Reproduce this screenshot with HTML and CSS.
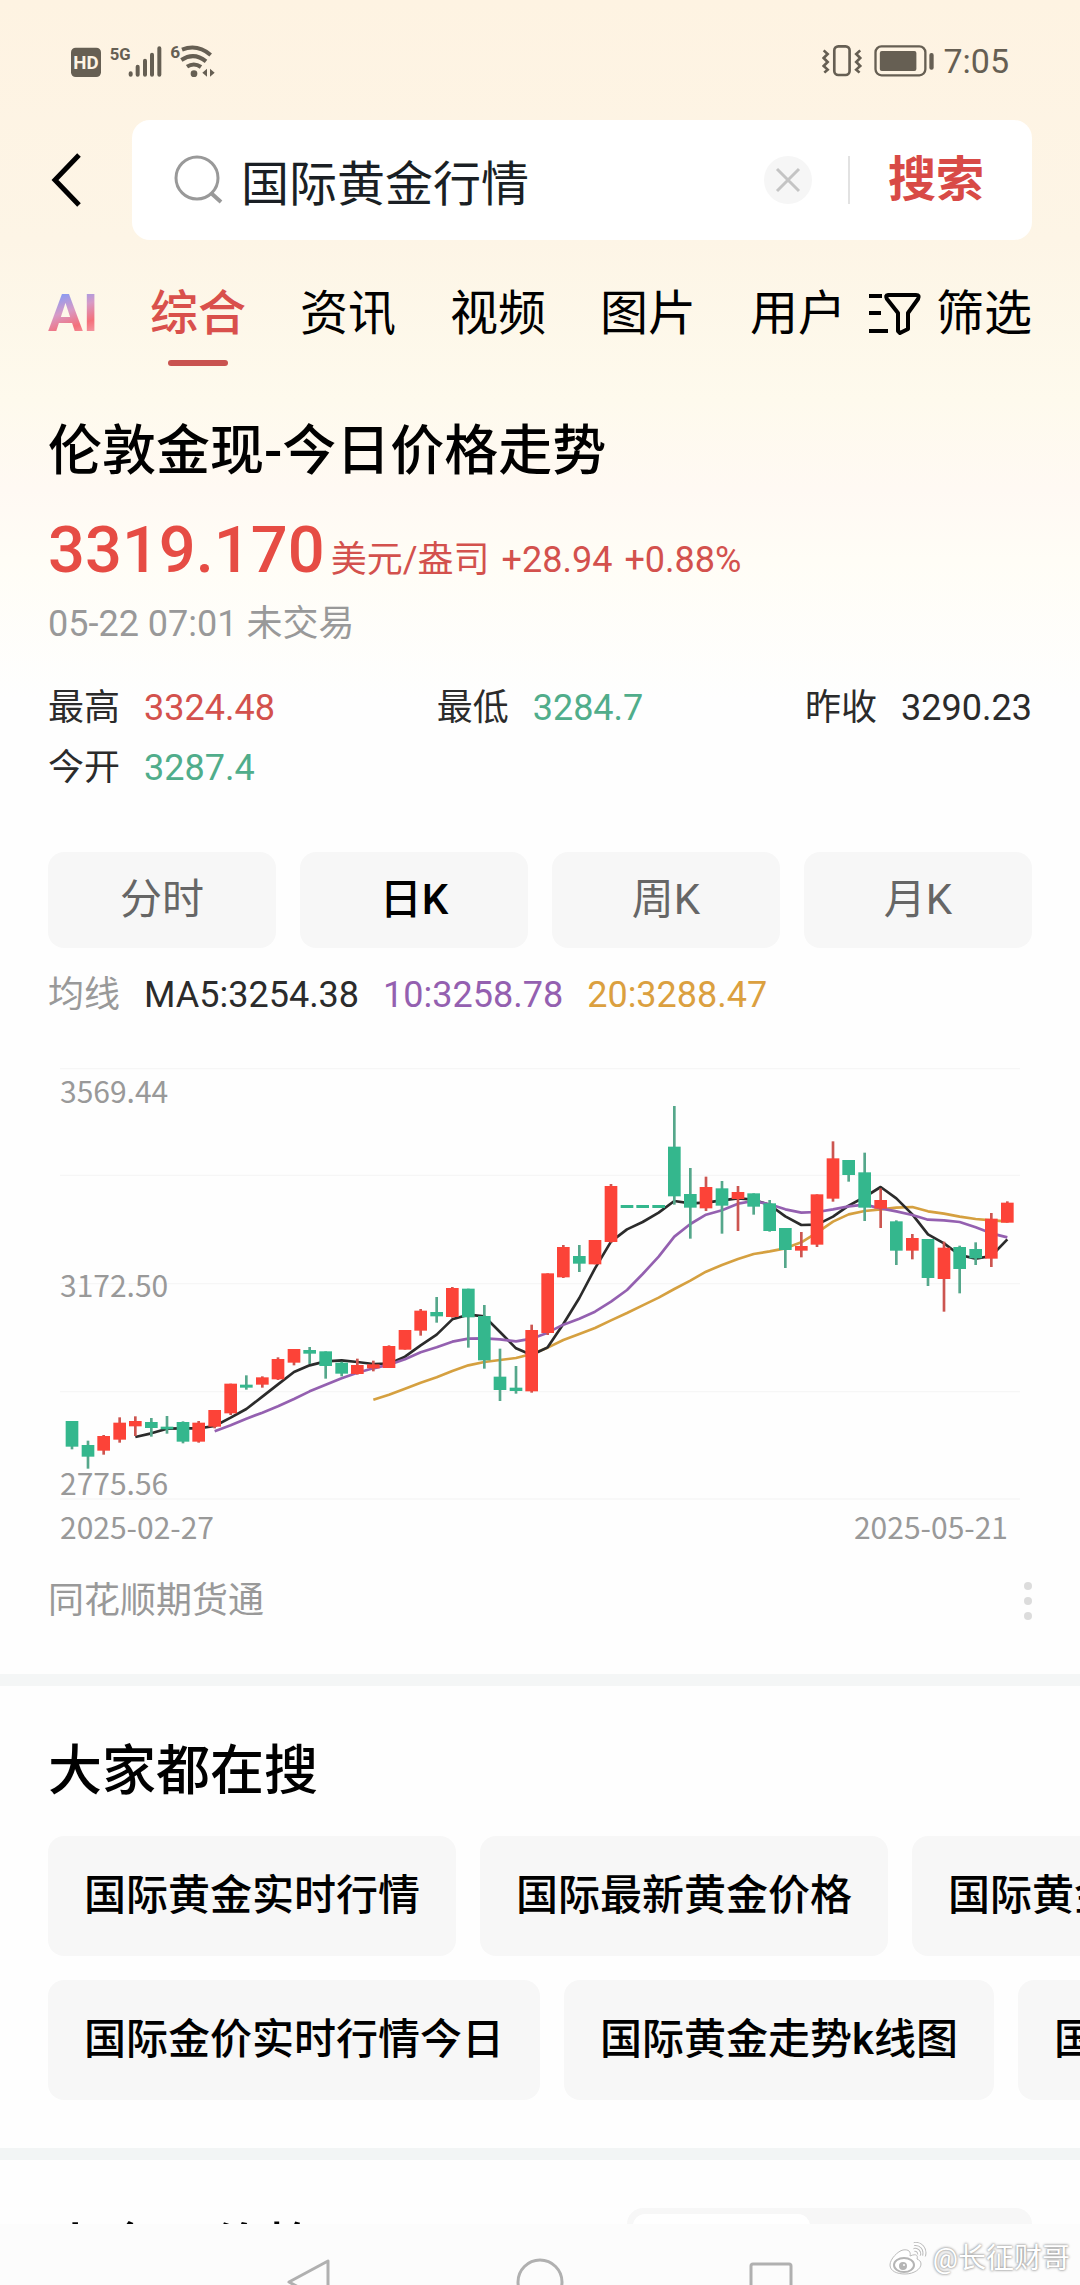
FILE: index.html
```html
<!DOCTYPE html>
<html lang="zh-CN">
<head>
    <meta charset="UTF-8">
    <meta name="viewport" content="width=device-width, initial-scale=1.0">
    <title>国际黄金行情</title>
    <link rel="stylesheet" href="styles.css">
</head>
<body>
<div class="app">
    <main class="feed">
        <div class="status-bar">
            <svg class="status-left" viewBox="33 40 435 105" aria-hidden="true">
                <rect x="33" y="51" width="90" height="88" rx="14" fill="#665f53"/>
                <text class="svg-label" x="78" y="115" font-size="56" fill="#fdf3e3" text-anchor="middle">HD</text>
                <text class="svg-label" x="149" y="87" font-size="50" fill="#665f53">5G</text>
                <g stroke="#665f53" stroke-width="12" stroke-linecap="round">
                    <path d="M212 128v4M233 108v24M255 90v42M276 72v60M298 53v79"/>
                </g>
                <text class="svg-label" x="331" y="83" font-size="52" fill="#665f53">6</text>
                <g fill="none" stroke="#665f53" stroke-width="12">
                    <path d="M366 57Q412 39 452 73M364 88Q402 63 438 92M381 108Q402 94 423 109"/>
                </g>
                <circle cx="402" cy="129" r="10" fill="#665f53"/>
                <path d="M427 126l14-12v24zM464 126l-14-12v24z" fill="#665f53"/>
            </svg>
            <div class="status-right">
                <svg class="status-battery" viewBox="36 42 340 102" aria-hidden="true">
                    <g fill="none" stroke="#665f53" stroke-width="8">
                        <rect x="73" y="49" width="46" height="86" rx="12"/>
                        <path d="M41 61l12 11-12 12 12 12-12 12 12 11-10 9M151 61l-12 11 12 12-12 12 12 12-12 11 10 9"/>
                        <rect x="197" y="49" width="150" height="87" rx="18" stroke-width="7"/>
                    </g>
                    <rect x="210" y="63" width="110" height="60" rx="6" fill="#665f53"/>
                    <rect x="359" y="69" width="13" height="50" rx="6" fill="#665f53"/>
                </svg>
                <span class="clock">7:05</span>
            </div>
        </div>

        <header class="search-row">
            <button class="back-btn" aria-label="返回">
                <svg viewBox="0 0 36 60"><path d="M31 5L7 30l24 25" fill="none" stroke="#000" stroke-width="5"/></svg>
            </button>
            <form class="search-box" onsubmit="return false">
                <svg class="search-icon" viewBox="0 0 50 50" aria-hidden="true">
                    <circle cx="23" cy="23" r="21" fill="none" stroke="#999" stroke-width="3"/>
                    <path d="M37 38l10 9" stroke="#999" stroke-width="4"/>
                </svg>
                <input class="search-input" type="text" value="国际黄金行情" aria-label="搜索内容">
                <button class="clear-btn" type="button" aria-label="清空">
                    <svg viewBox="0 0 48 48"><path d="M13 13l22 22M35 13L13 35" stroke="#c4c4c4" stroke-width="3"/></svg>
                </button>
                <button class="search-btn" type="submit">搜索</button>
            </form>
        </header>

        <div class="tab-row">
            <nav class="tabs">
                <a class="tab tab-ai" href="#">AI</a>
                <a class="tab active" href="#">综合</a>
                <a class="tab" href="#">资讯</a>
                <a class="tab" href="#">视频</a>
                <a class="tab" href="#">图片</a>
                <a class="tab" href="#">用户</a>
            </nav>
            <button class="filter-btn">
                <svg viewBox="0 0 54 46" aria-hidden="true">
                    <path d="M1 5h13M1 22h12M1 40h19" fill="none" stroke="#000" stroke-width="4"/>
                    <path d="M20 4h28q4 0 2 4L40 22v16l-8 4-2-2V22L19 8q-2-4 1-4z" fill="none" stroke="#000" stroke-width="4" stroke-linejoin="round"/>
                </svg>
                筛选
            </button>
        </div>

        <section class="quote">
            <h1 class="title">伦敦金现-今日价格走势</h1>
            <p class="price-line">
                <strong class="price">3319.170</strong>
                <span class="change"><span>美元/盎司</span><span>+28.94</span><span>+0.88%</span></span>
            </p>
            <p class="trade-time">05-22 07:01 未交易</p>

            <dl class="stats">
                <div class="stat"><dt>最高</dt><dd class="up">3324.48</dd></div>
                <div class="stat"><dt>最低</dt><dd class="down">3284.7</dd></div>
                <div class="stat"><dt>昨收</dt><dd>3290.23</dd></div>
                <div class="stat"><dt>今开</dt><dd class="down">3287.4</dd></div>
            </dl>

            <div class="ranges">
                <button class="range">分时</button>
                <button class="range active">日K</button>
                <button class="range">周K</button>
                <button class="range">月K</button>
            </div>

            <p class="averages">
                <span class="muted">均线</span>
                <span>MA5:3254.38</span>
                <span class="ma10">10:3258.78</span>
                <span class="ma20">20:3288.47</span>
            </p>

            <div class="chart">
                <svg id="kline" viewBox="0 0 2880 1350" role="img" aria-label="日K线图"></svg>
                <span class="axis axis-top">3569.44</span>
                <span class="axis axis-mid">3172.50</span>
                <span class="axis axis-low">2775.56</span>
            </div>
            <div class="dates">
                <span>2025-02-27</span>
                <span>2025-05-21</span>
            </div>

            <div class="source">
                <a href="#">同花顺期货通</a>
                <button class="more-btn" aria-label="更多">
                    <svg viewBox="0 0 8 38"><g fill="#dcdcdc"><circle cx="4" cy="4" r="4"/><circle cx="4" cy="19" r="4"/><circle cx="4" cy="34" r="4"/></g></svg>
                </button>
            </div>
        </section>

        <section class="related">
            <h2 class="title">大家都在搜</h2>
            <div class="chips">
                <a class="chip" href="#">国际黄金实时行情</a>
                <a class="chip" href="#">国际最新黄金价格</a>
                <a class="chip" href="#">国际黄金价格</a>
            </div>
            <div class="chips">
                <a class="chip" href="#">国际金价实时行情今日</a>
                <a class="chip" href="#">国际黄金走势k线图</a>
                <a class="chip" href="#">国际金价</a>
            </div>
        </section>

        <section class="beans">
            <h2 class="title">小金豆价格</h2>
            <div class="switch"><div class="switch-thumb"></div></div>
        </section>
    </main>

    <footer class="nav-bar">
        <button aria-label="后退"><svg viewBox="0 0 48 48"><path d="M43 3v42L4 24z"/></svg></button>
        <button aria-label="主页"><svg viewBox="0 0 48 48"><circle cx="24" cy="24" r="22"/></svg></button>
        <button aria-label="任务"><svg viewBox="0 0 48 48"><rect x="4" y="6" width="40" height="40" rx="2"/></svg></button>
    </footer>

    <div class="watermark">
        <svg viewBox="0 0 38 34" aria-hidden="true">
            <path d="M14 8c-5 1-13 9-13 15 0 6 7 9 15 9 9 0 16-5 16-10 0-3-2-4-4-5 1-3 0-6-7-3 1-4-1-7-7-6z" fill="#fff" stroke="#bbb"/>
            <ellipse cx="15" cy="23" rx="10" ry="7" fill="#fff" stroke="#b5b5b5" stroke-width="2"/>
            <circle cx="14" cy="24" r="4" fill="#b5b5b5"/>
            <circle cx="15" cy="23" r="1" fill="#fff"/>
            <path d="M25 2c7-1 12 5 10 12M25 8c3-1 6 2 5 5" fill="none" stroke="#bbb" stroke-width="4"/>
            <path d="M25 2c7-1 12 5 10 12M25 8c3-1 6 2 5 5" fill="none" stroke="#fff" stroke-width="2"/>
        </svg>
        <span>@长征财哥</span>
    </div>
</div>
<script src="chart.js"></script>
</body>
</html>
```
FILE: styles.css
```css
* {
    box-sizing: border-box;
}

body {
    margin: 0;
    font-family: Roboto, "Noto Sans CJK SC", sans-serif;
    font-size: 36px;
    line-height: 60px;
    color: #2b2b2b;
    background-color: #fefefe;
}

h1, h2, p, dl, dd {
    margin: 0;
}

a {
    color: inherit;
    text-decoration: none;
}

button {
    padding: 0;
    border: none;
    background: none;
    font: inherit;
    color: inherit;
    cursor: pointer;
}

svg {
    display: block;
}

.app {
    position: relative;
    display: flex;
    flex-direction: column;
    height: 100vh;
    overflow: hidden;
}

.feed {
    flex: 1;
    min-height: 0;
    overflow: hidden;
    background: linear-gradient(#fef3e2 0, #fdf5e6 240px, #fefaed 400px, #fff9f3 490px, #fffdf6 560px, #fefefe 700px);
}

/* status bar */
.status-bar {
    display: flex;
    align-items: center;
    justify-content: space-between;
    height: 120px;
    padding: 2px 71px 0;
}

.status-left {
    width: 145px;
    height: 35px;
}

.status-battery {
    width: 113px;
    height: 34px;
}

.status-right {
    display: flex;
    align-items: center;
    gap: 8px;
}

.clock {
    font-size: 34px;
    color: #665f53;
}

.svg-label {
    font-family: Roboto, sans-serif;
    font-weight: bold;
}

/* search */
.search-row {
    display: flex;
    align-items: center;
    gap: 48px;
    padding: 0 48px;
}

.back-btn {
    width: 36px;
}

.search-box {
    flex: 1;
    min-width: 0;
    display: flex;
    align-items: center;
    height: 120px;
    padding: 0 48px 0 42px;
    border-radius: 18px;
    background-color: #fff;
}

.search-icon {
    width: 50px;
    height: 50px;
}

.search-input {
    flex: 1;
    min-width: 0;
    height: 72px;
    margin-left: 17px;
    padding: 0;
    border: none;
    outline: none;
    background: none;
    font: inherit;
    font-size: 48px;
    color: #1a1f24;
}

.clear-btn {
    width: 48px;
    height: 48px;
    border-radius: 50%;
    background-color: #f6f6f6;
}

.search-btn {
    margin-left: 36px;
    padding-left: 38px;
    border-left: 2px solid #e2e2e2;
    font-size: 48px;
    line-height: 48px;
    font-weight: bold;
    color: #d84a46;
}

/* tabs */
.tab-row {
    display: flex;
    justify-content: space-between;
    margin-top: 38px;
    padding: 0 48px;
    font-size: 48px;
    line-height: 72px;
    color: #000;
}

.tabs {
    display: flex;
    gap: 54px;
}

.tab {
    flex: none;
}

.tab.active {
    font-weight: 500;
    color: #d9504c;
}

.tab.active::after {
    content: "";
    display: block;
    width: 60px;
    height: 6px;
    margin: 10px auto 0;
    border-radius: 3px;
    background-color: #c95350;
}

.tab-ai {
    width: 48px;
    height: 72px;
    font-size: 52px;
    font-weight: bold;
    color: transparent;
    background: linear-gradient(160deg, #8f9bf0 25%, #d79ac6 45%, #f4707a 65%, #f5a9b4 85%);
    -webkit-background-clip: text;
    background-clip: text;
}

.filter-btn {
    flex: none;
    display: flex;
    align-items: center;
    gap: 14px;
    height: 72px;
}

.filter-btn svg {
    width: 54px;
    height: 46px;
}

/* quote */
.quote {
    padding: 50px 48px 43px;
    border-bottom: 12px solid #f4f6f6;
}

.title {
    font-size: 54px;
    line-height: 72px;
    font-weight: 500;
    color: #000;
}

.price-line {
    display: flex;
    align-items: baseline;
    gap: 6px;
    height: 72px;
    margin-top: 26px;
    line-height: 72px;
    color: #d3514d;
}

.price {
    font-size: 65px;
    font-weight: 500;
    color: #e64c44;
}

.change {
    display: flex;
    gap: 12px;
}

.trade-time,
.muted {
    color: #999;
}

.trade-time {
    margin-top: 8px;
}

.stats {
    display: grid;
    grid-template-columns: auto auto auto;
    justify-content: space-between;
    margin-top: 24px;
}

.stat {
    display: flex;
    gap: 24px;
}

.up {
    color: #d3514d;
}

.down {
    color: #50ad8b;
}

.ranges {
    display: grid;
    grid-template-columns: repeat(4, 1fr);
    gap: 24px;
    margin-top: 54px;
}

.range {
    height: 96px;
    border-radius: 16px;
    background-color: #f7f7f7;
    font-size: 42px;
    color: #666;
}

.range.active {
    font-weight: 500;
    color: #000;
}

.averages {
    display: flex;
    gap: 24px;
    margin-top: 17px;
}

.ma10 {
    color: #9460b0;
}

.ma20 {
    color: #dba03f;
}

.chart {
    position: relative;
    margin: 25px 12px 0;
}

.axis,
.dates {
    font-family: "Noto Sans CJK SC", sans-serif;
    font-size: 30px;
    color: #999;
}

/* price labels lie over the plot */
.axis {
    position: absolute;
    left: 0;
    line-height: 44px;
}

.axis-top { top: 4%; }
.axis-mid { top: 47%; }
.axis-low { bottom: -4px; }

.dates {
    display: flex;
    justify-content: space-between;
    padding: 0 24px 0 12px;
    line-height: 52px;
}

.source {
    display: flex;
    align-items: center;
    justify-content: space-between;
    margin-top: 19px;
    color: #999;
}

.more-btn {
    width: 8px;
}

/* related searches */
.related {
    padding: 50px 0 48px 48px;
    border-bottom: 12px solid #f2f5f5;
    overflow: hidden;
}

.chips {
    display: flex;
    gap: 24px;
    margin-top: 24px;
}

.title + .chips {
    margin-top: 28px;
}

.chip {
    flex: none;
    padding: 0 36px;
    border-radius: 16px;
    background-color: #f7f7f7;
    font-size: 42px;
    line-height: 120px;
    font-weight: 500;
    color: #000;
}

.beans {
    display: flex;
    justify-content: space-between;
    padding: 48px 48px 0;
}

.beans .title {
    line-height: 84px;
}

.switch {
    width: 405px;
    height: 84px;
    padding: 6px;
    border-radius: 16px;
    background-color: #f7f7f7;
}

.switch-thumb {
    width: 45%;
    height: 72px;
    border-radius: 12px;
    background-color: #fff;
}

/* system navigation */
.nav-bar {
    flex: none;
    display: flex;
    justify-content: center;
    gap: 183px;
    height: 61px;
    padding-top: 34px;
    background-color: #fcfcfc;
    overflow: hidden;
}

.nav-bar svg {
    width: 48px;
    height: 48px;
    fill: none;
    stroke: #b0b0b0;
    stroke-width: 3;
    stroke-linejoin: round;
}

.nav-bar button {
    height: 48px;
}

.watermark {
    position: absolute;
    right: 10px;
    bottom: 6px;
    display: flex;
    align-items: center;
    gap: 6px;
    font-size: 28px;
    line-height: 40px;
    color: #fff;
    text-shadow: 0 0 3px #888, 0 0 2px #aaa;
}

.watermark svg {
    width: 38px;
    height: 34px;
}

/* k-line */
.grid-line { stroke: #f6f6f6; stroke-width: 4; }
.line { fill: none; stroke-width: 8; stroke-linejoin: round; }
.line-ma5 { stroke: #2b2b2b; }
.line-ma10 { stroke: #9460b0; }
.line-ma20 { stroke: #d5a040; }
.candle-up { fill: #fc4338; }
.candle-down { fill: #34b78d; }
.wick-up { fill: #cc5550; }
.wick-down { fill: #55a78b; }
```
FILE: chart.js
```javascript
// one candle per trading day: direction, high, body top, body bottom, low
const candles = [
    ["down", 1113, 1113, 1190, 1198], ["down", 1172, 1185, 1220, 1256], ["up", 1155, 1158, 1202, 1214],
    ["up", 1102, 1118, 1169, 1178], ["up", 1099, 1113, 1129, 1158], ["down", 1104, 1116, 1134, 1160],
    ["down", 1098, 1130, 1138, 1151], ["down", 1114, 1116, 1175, 1180], ["up", 1113, 1118, 1175, 1178],
    ["up", 1080, 1080, 1130, 1135], ["up", 1001, 1001, 1090, 1095], ["down", 976, 1004, 1013, 1019],
    ["up", 979, 982, 1004, 1013], ["up", 922, 927, 988, 990], ["up", 897, 897, 938, 946],
    ["down", 891, 900, 911, 942], ["down", 904, 904, 948, 986], ["down", 935, 938, 971, 979],
    ["up", 926, 945, 972, 974], ["up", 932, 943, 955, 964], ["up", 886, 888, 954, 954],
    ["up", 840, 840, 899, 899], ["up", 777, 782, 842, 857], ["down", 741, 786, 799, 818],
    ["up", 711, 714, 801, 803], ["down", 716, 716, 802, 893], ["down", 765, 798, 931, 956],
    ["down", 896, 980, 1020, 1053], ["down", 948, 1013, 1023, 1031], ["up", 824, 840, 1024, 1028],
    ["up", 670, 670, 849, 855], ["up", 585, 591, 682, 684], ["down", 585, 618, 641, 666],
    ["up", 570, 570, 643, 643], ["up", 402, 408, 576, 578], ["down", 465, 465, 474, 474],
    ["down", 465, 465, 474, 474], ["down", 465, 465, 474, 474], ["down", 168, 290, 439, 464],
    ["down", 354, 432, 473, 566], ["up", 380, 411, 475, 483], ["down", 393, 415, 467, 551],
    ["up", 408, 426, 447, 543], ["down", 430, 430, 470, 494], ["down", 450, 460, 543, 545],
    ["down", 534, 534, 600, 654], ["up", 546, 588, 602, 622], ["up", 433, 433, 584, 591],
    ["up", 274, 325, 446, 455], ["down", 330, 330, 375, 395], ["down", 308, 367, 473, 513],
    ["up", 415, 450, 476, 534], ["down", 511, 514, 602, 645], ["up", 552, 564, 602, 628],
    ["down", 567, 567, 684, 708], ["up", 575, 593, 687, 785], ["down", 587, 591, 657, 730],
    ["down", 577, 597, 625, 645], ["up", 489, 506, 626, 651], ["up", 454, 458, 518, 518]
];

const ma5 = [1161, 1150, 1136, 1135, 1135, 1128, 1103, 1077, 1040, 1003, 966, 946, 934, 931, 936, 942, 941, 920, 886, 854,
    808, 794, 799, 846, 895, 915, 892, 822, 744, 655, 575, 538, 516, 488, 453, 460, 458, 451, 445, 449,
    465, 499, 525, 524, 500, 467, 441, 411, 445, 493, 553, 580, 615, 626, 618, 568];
const ma10 = [1144, 1126, 1106, 1088, 1069, 1047, 1024, 1004, 985, 968, 955, 944, 928, 907, 892, 875, 866, 865, 868, 874,
    866, 848, 824, 806, 785, 755, 720, 672, 620, 560, 522, 494, 481, 461, 453, 463, 478, 488, 486, 478,
    469, 464, 475, 484, 495, 509, 511, 516, 532, 550, 562];
const ma20 = [1049, 1034, 1016, 998, 982, 963, 946, 936, 930, 924, 912, 893, 870, 852, 834, 811, 789, 766, 743, 717,
    692, 665, 645, 627, 612, 604, 595, 577, 548, 515, 493, 483, 478, 473, 471, 484, 491, 500, 507, 511, 514];

const step = 47.56;
const xAt = i => Math.round(36 + i * step);

function polyline(values, name) {
    const first = candles.length - values.length;
    const points = values.map((y, i) => `${xAt(first + i)},${y}`).join(" ");
    return `<polyline class="line line-${name}" points="${points}"/>`;
}

let out = "";
[56, 376, 701, 1025, 1347].forEach(y => {
    out += `<line class="grid-line" x1="0" x2="2880" y1="${y}" y2="${y}"/>`;
});
out += polyline(ma20, "ma20") + polyline(ma5, "ma5") + polyline(ma10, "ma10");
candles.forEach(([dir, high, top, bottom, low], i) => {
    const x = xAt(i);
    out += `<rect class="wick-${dir}" x="${x - 4}" y="${high}" width="8" height="${low - high}"/>`;
    out += `<rect class="candle-${dir}" x="${x - 19}" y="${top}" width="38" height="${bottom - top}"/>`;
});
document.getElementById("kline").innerHTML = out;
```
